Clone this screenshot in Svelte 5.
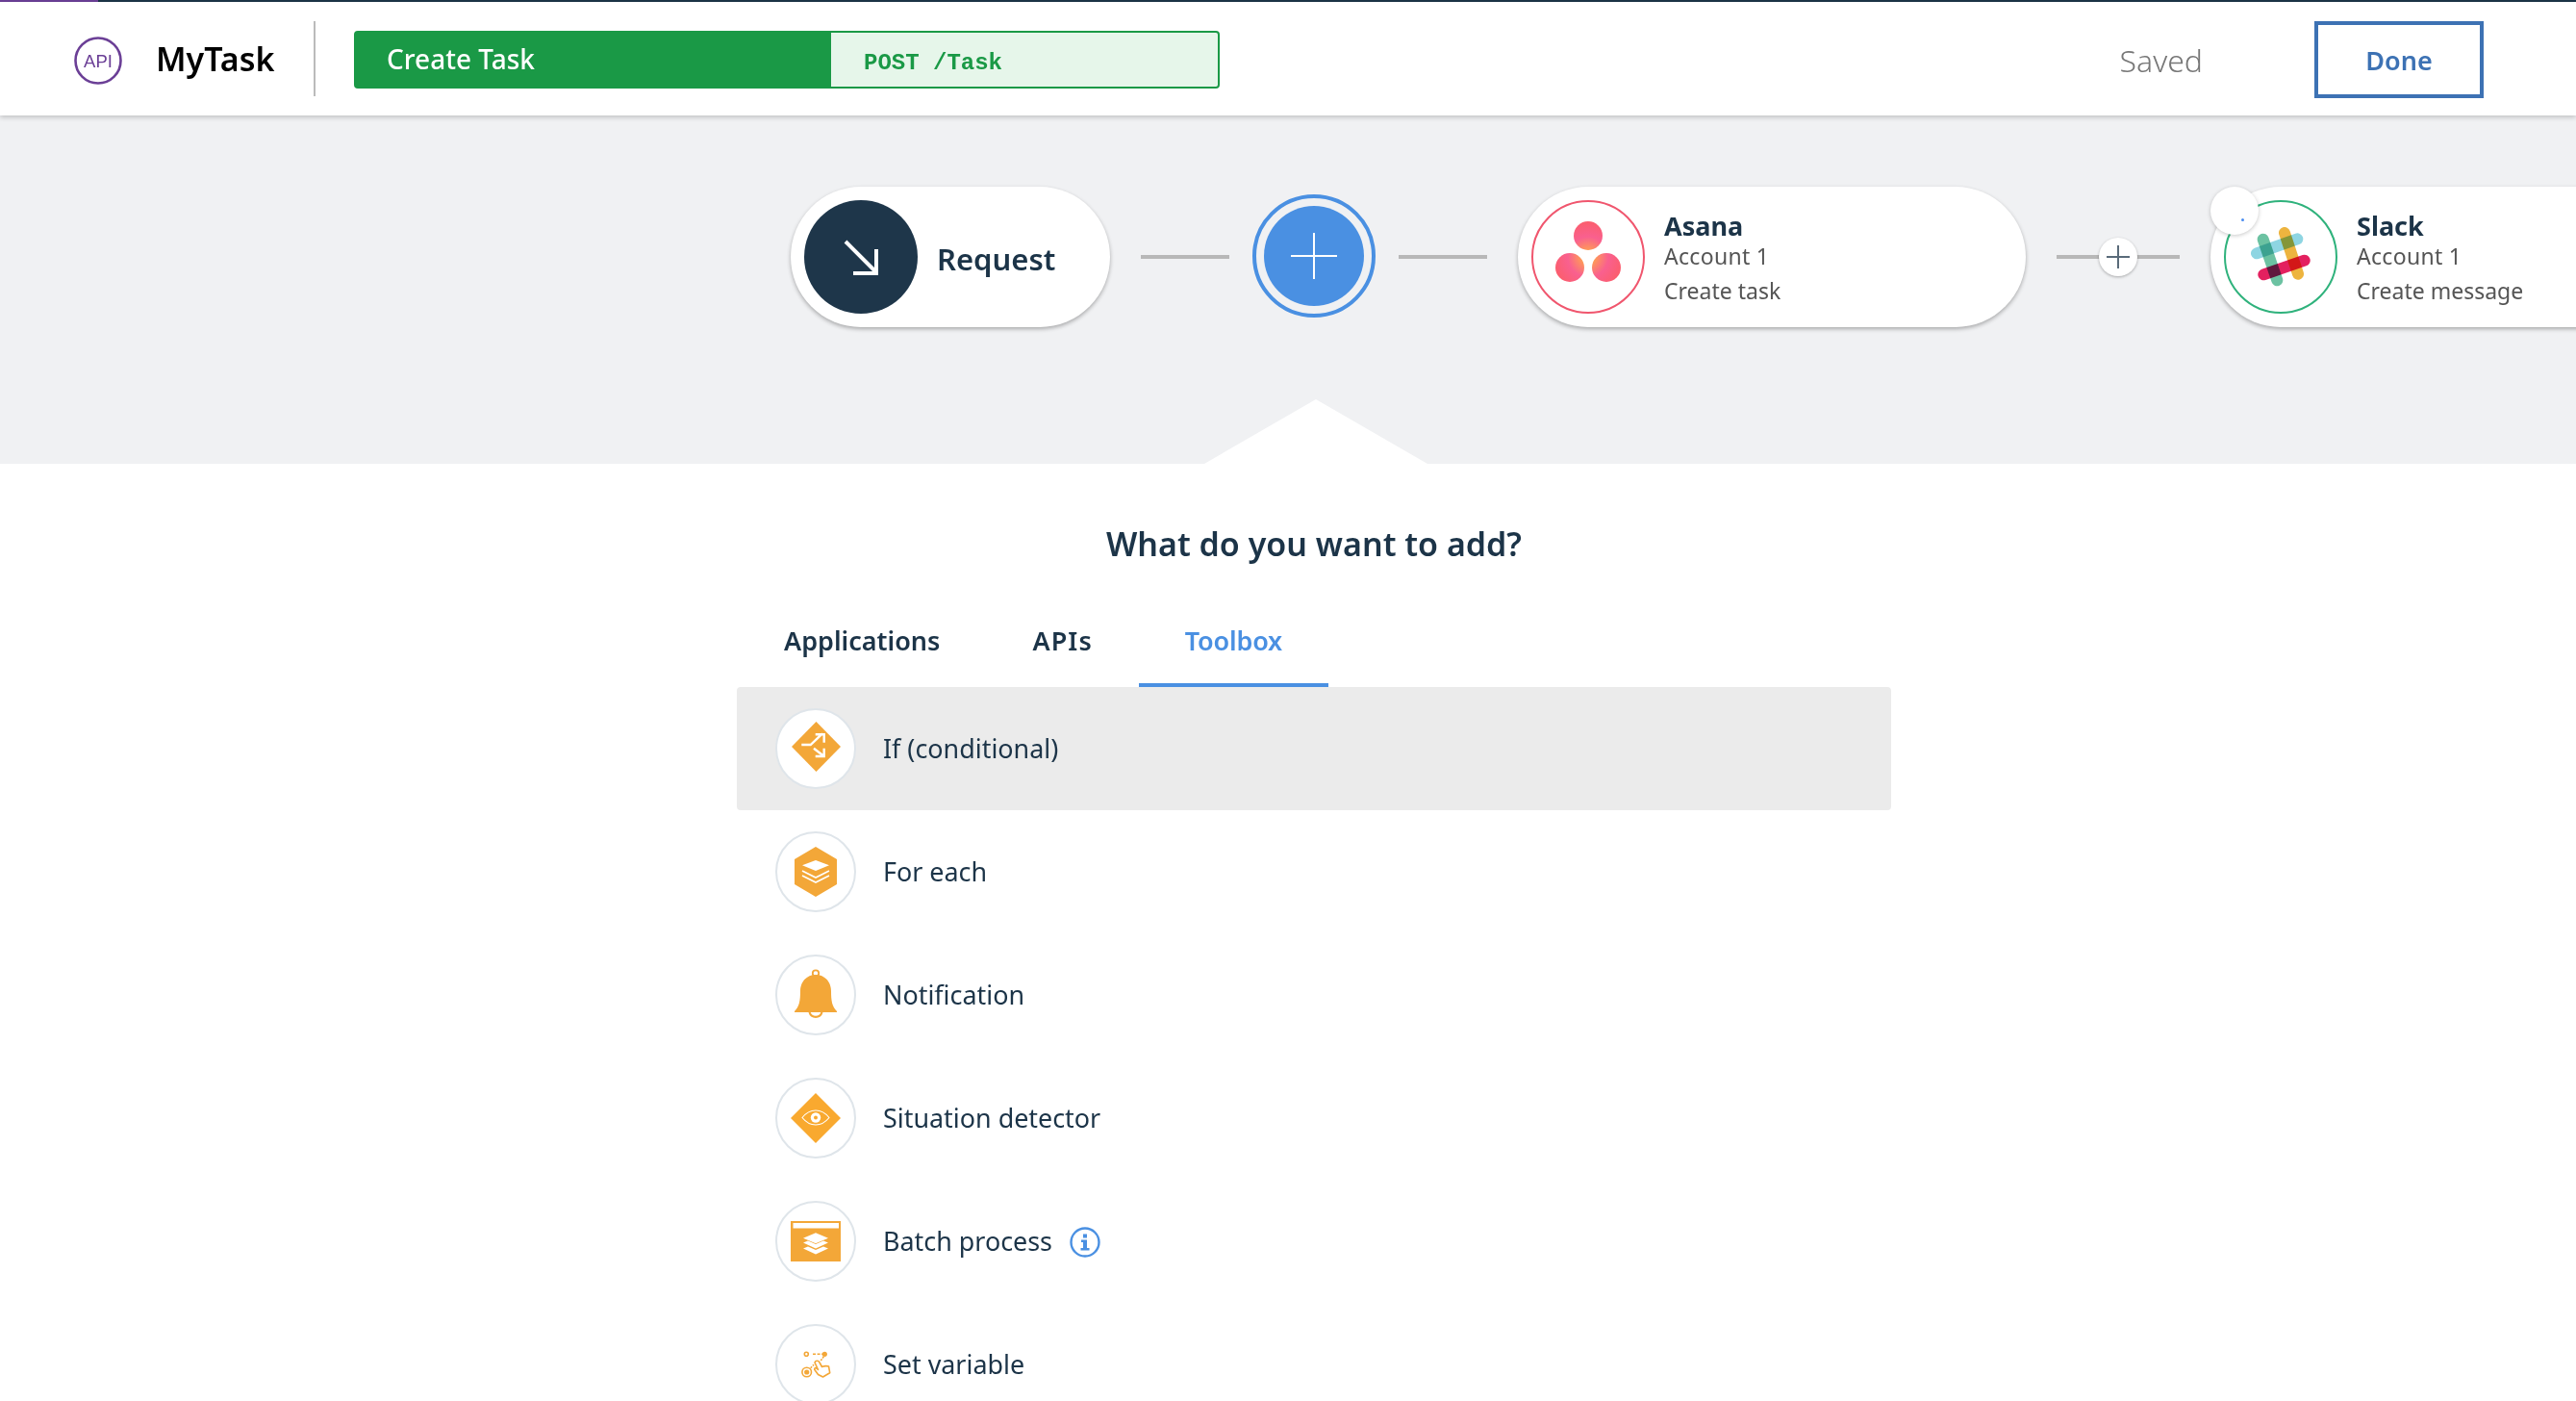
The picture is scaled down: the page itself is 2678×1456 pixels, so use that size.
<script>
  const rows = ['If (conditional)', 'For each', 'Notification', 'Situation detector', 'Batch process', 'Set variable'];
</script>

<div class="page">
  <div class="strip"><div class="strip-accent"></div></div>
  <header class="header">
    <svg class="api" width="50" height="50" viewBox="0 0 50 50">
      <circle cx="25" cy="25" r="23.5" fill="none" stroke="#6b3f96" stroke-width="2.6" />
      <text x="25" y="31.5" text-anchor="middle" class="api-text">API</text>
    </svg>
    <div class="app-name">MyTask</div>
    <div class="divider"></div>
    <div class="endpoint">
      <div class="endpoint-name">Create Task</div>
      <div class="endpoint-path">POST /Task</div>
    </div>
    <div class="saved">Saved</div>
    <button class="done">Done</button>
  </header>

  <section class="canvas">
    <div class="pill request">
      <div class="req-icon">
        <svg width="118" height="118" viewBox="0 0 118 118">
          <path d="M43 43L75 75M51 76H75V51" fill="none" stroke="#fff" stroke-width="4" />
        </svg>
      </div>
      <div class="req-label">Request</div>
    </div>
    <div class="line wide"></div>
    <div class="add-ring">
      <div class="add">
        <svg width="104" height="104" viewBox="0 0 104 104">
          <path d="M28 52H76M52 28V76" stroke="#fff" stroke-width="2" />
        </svg>
      </div>
    </div>
    <div class="line wide"></div>
    <div class="pill app">
      <div class="app-icon asana">
        <svg width="118" height="118" viewBox="0 0 118 118">
          <defs>
            <radialGradient id="asanaFill" gradientUnits="userSpaceOnUse" cx="59" cy="59" r="42">
              <stop offset="0.1" stop-color="#ffa64d" />
              <stop offset="0.5" stop-color="#f9608f" />
              <stop offset="1" stop-color="#fc5d62" />
            </radialGradient>
          </defs>
          <circle cx="59" cy="37" r="15" fill="url(#asanaFill)" />
          <circle cx="40" cy="70" r="15" fill="url(#asanaFill)" />
          <circle cx="78" cy="70" r="15" fill="url(#asanaFill)" />
        </svg>
      </div>
      <div class="app-text">
        <div class="app-title">Asana</div>
        <div class="app-sub first">Account 1</div>
        <div class="app-sub">Create task</div>
      </div>
    </div>
    <div class="line mini">
      <div class="mini-plus">
        <svg width="40" height="40" viewBox="0 0 40 40">
          <path d="M8 20H32M20 8V32" stroke="#5a6b7a" stroke-width="2" />
        </svg>
      </div>
    </div>
    <div class="pill app slack-pill">
      <div class="badge"><span class="badge-dot"></span></div>
      <div class="app-icon slack">
        <svg width="118" height="118" viewBox="0 0 118 118">
          <g fill="none" stroke-width="12" stroke-linecap="round">
            <path class="mul" d="M40.7 40.7L55.3 83.3" stroke="#6cc2a2" />
            <path class="mul" d="M63 34L77 76.7" stroke="#edb43f" />
            <path class="mul" d="M34 55.3L76.3 40.3" stroke="#8ed5e2" />
            <path class="mul" d="M41.3 77.3L83.7 62.7" stroke="#e3205f" />
          </g>
        </svg>
      </div>
      <div class="app-text">
        <div class="app-title">Slack</div>
        <div class="app-sub first">Account 1</div>
        <div class="app-sub">Create message</div>
      </div>
    </div>
    <div class="pointer"></div>
  </section>

  <main class="content">
    <h1 class="title">What do you want to add?</h1>
    <nav class="tabs">
      <div class="tab">Applications</div>
      <div class="tab apis">APIs</div>
      <div class="tab active">Toolbox</div>
    </nav>
    <div class="list">
      {#each rows as label, i}
        <div class="row" class:hover={i === 0}>
          <div class="row-icon">
            <svg width="84" height="84" viewBox="0 0 84 84">
              {#if i === 0}
                <path d="M42.5 14L68 40L42.5 66L17 40Z" fill="#f3a738" />
                <path d="M27.3 38H36.7L49 26.3M41.7 27.3H50.7V35.7M40 41.7L50.7 50M41.7 50H50.7V41.7" fill="none" stroke="#fff" stroke-width="2.4" />
              {:else if i === 1}
                <path d="M42 16L64 29V55L42 68L20 55V29Z" fill="#f3a738" />
                <path d="M28 35.3L42 30L56 35.3L42 41Z" fill="#fff" />
                <path d="M28 41L42 48L56 41M28 46L42 53L56 46" fill="none" stroke="#fff" stroke-width="1.6" />
              {:else if i === 2}
                <circle cx="42" cy="19.5" r="3.2" fill="none" stroke="#f3a738" stroke-width="1.8" />
                <path d="M20 59C25 54 26 48 26 38C26 28 33 21 42 21C51 21 58 28 58 38C58 48 59 54 64 59V60H20Z" fill="#f3a738" />
                <path d="M35.5 60A6.8 6.8 0 0 0 48.5 60" fill="none" stroke="#f3a738" stroke-width="2.2" />
              {:else if i === 3}
                <path d="M42 16L68 42L42 68L16 42Z" fill="#f9a92f" />
                <path d="M28 41.5C36 31.5 48 31.5 56 41.5C48 51.5 36 51.5 28 41.5Z" fill="none" stroke="#fff" stroke-width="1.1" />
                <circle cx="42" cy="41.5" r="5.2" fill="#fff" />
                <circle cx="42" cy="41.5" r="2" fill="#f9a92f" />
              {:else if i === 4}
                <rect x="16" y="21" width="52" height="42" fill="#f3a738" />
                <rect x="18.5" y="23" width="47.5" height="5.5" fill="#fff" />
                <path d="M29 38.7L42 33.3L55 38.7L42 44.3Z" fill="#fff" />
                <path d="M29 43.5L34 41.5L42 45L50 41.5L55 43.5L42 49.5Z" fill="#fff" />
                <path d="M29 49.5L34 47.5L42 51L50 47.5L55 49.5L42 55.5Z" fill="#fff" />
              {:else}
                <g fill="none" stroke="#f3a738" stroke-width="1.6">
                  <circle cx="32.3" cy="31.3" r="2" />
                  <path d="M39 31.3H49" stroke-dasharray="3 1.6" />
                  <circle cx="32.7" cy="50" r="4.8" />
                  <path d="M36.7 45.7L40 42.3M47.3 38L50.7 33.3" stroke-dasharray="2 1.2" />
                  <path d="M41 40C42 37.5 45 38 46 40L48.5 44.5C51 43.5 54 43.5 55.5 44L56.7 50.7L49.5 55L44.5 52.5L40.7 47.3C40.5 45.5 42 45 43.5 46.5L44.5 47.5Z" stroke-linejoin="round" />
                </g>
                <circle cx="51.3" cy="31.3" r="2.6" fill="#f3a738" />
                <circle cx="32.7" cy="50" r="2.6" fill="#f3a738" />
              {/if}
            </svg>
          </div>
          <div class="row-label">{label}</div>
          {#if i === 4}
            <svg class="info" width="32" height="32" viewBox="0 0 32 32">
              <circle cx="16" cy="16" r="14.5" fill="none" stroke="#4a90e2" stroke-width="2.4" />
              <rect x="14" y="7.5" width="4" height="4" fill="#4a90e2" />
              <path d="M12 13.5H18V22H20.5V24.5H11.5V22H14V16H12Z" fill="#4a90e2" />
            </svg>
          {/if}
        </div>
      {/each}
    </div>
  </main>
</div>

<style>
  :global(body) {
    margin: 0;
    background: #fff;
    overflow: hidden;
  }
  .page {
    width: 2678px;
    height: 1456px;
    overflow: hidden;
    font-family: "Noto Sans", "Open Sans", sans-serif;
    color: #1c3448;
  }
  .strip {
    height: 2px;
    background: #1c3448;
  }
  .strip-accent {
    width: 102px;
    height: 2px;
    background: #6b3f96;
  }
  .header {
    position: relative;
    z-index: 2;
    height: 118px;
    display: flex;
    align-items: center;
    padding: 0 96px 0 77px;
    background: #fff;
    box-shadow: 0 2px 5px rgba(0, 0, 0, 0.2);
  }
  .api {
    flex: none;
    margin-top: 4px;
  }
  .api-text {
    font-family: "Liberation Sans", sans-serif;
    font-size: 18.5px;
    fill: #6b3f96;
  }
  .app-name {
    margin-left: 35px;
    width: 123px;
    font-size: 34px;
    font-weight: 600;
    color: #000;
    white-space: nowrap;
  }
  .divider {
    margin-left: 41px;
    width: 2px;
    height: 78px;
    background: #bbb;
  }
  .endpoint {
    margin-left: 40px;
    margin-top: 2px;
    width: 900px;
    height: 60px;
    box-sizing: border-box;
    display: flex;
    border: 2px solid #1a9946;
    border-radius: 4px;
    background: #1a9946;
  }
  .endpoint-name {
    width: 494px;
    padding-left: 32px;
    box-sizing: border-box;
    font-size: 28px;
    font-weight: 500;
    line-height: 54px;
    color: #fff;
  }
  .endpoint-path {
    flex: 1;
    padding: 7px 0 0 34px;
    background: #e6f6ea;
    border-radius: 0 2px 2px 0;
    font-family: "Liberation Mono", monospace;
    font-size: 24px;
    font-weight: 700;
    line-height: 49px;
    color: #1a9946;
  }
  .saved {
    margin-left: auto;
    margin-right: -1px;
    margin-top: 2px;
    font-size: 32px;
    font-weight: 300;
    color: #777;
  }
  .done {
    margin-left: 117px;
    width: 176px;
    height: 80px;
    margin-top: 2px;
    box-sizing: border-box;
    border: 4px solid #3d72b4;
    background: #fff;
    border-radius: 0;
    padding: 0;
    font-family: inherit;
    font-size: 27px;
    font-weight: 600;
    color: #3d72b4;
  }
  .canvas {
    position: relative;
    height: 362px;
    box-sizing: border-box;
    padding: 74px 0 0 822px;
    display: flex;
    align-items: flex-start;
    background: #f0f1f3;
  }
  .pill {
    flex: none;
    position: relative;
    box-sizing: border-box;
    height: 146px;
    display: flex;
    align-items: center;
    border-radius: 73px;
    background: #fff;
    box-shadow: 0 2px 4px rgba(0, 0, 0, 0.3);
  }
  .request {
    width: 332px;
    padding-left: 14px;
  }
  .req-icon {
    width: 118px;
    height: 118px;
    border-radius: 50%;
    background: #1e364a;
  }
  .req-icon svg,
  .add svg,
  .app-icon svg,
  .mini-plus svg,
  .row-icon svg {
    display: block;
  }
  .req-label {
    margin-left: 20px;
    padding-top: 3px;
    font-size: 31px;
    font-weight: 600;
    color: #1c3448;
  }
  .line {
    flex: none;
    height: 4px;
    margin-top: 71px;
    background: #b8b8b8;
  }
  .wide {
    width: 92px;
  }
  .request + .wide {
    margin: 71px 24px 0 32px;
  }
  .add-ring + .wide {
    margin: 71px 32px 0 24px;
  }
  .add-ring {
    flex: none;
    box-sizing: border-box;
    width: 128px;
    height: 128px;
    margin-top: 8px;
    padding: 8px;
    border: 4px solid #4a90e2;
    border-radius: 50%;
  }
  .add {
    width: 104px;
    height: 104px;
    border-radius: 50%;
    background: #4a90e2;
  }
  .app {
    width: 528px;
    padding-left: 14px;
  }
  .app-icon {
    flex: none;
    box-sizing: border-box;
    width: 118px;
    height: 118px;
    border-radius: 50%;
    background: #fff;
  }
  .app-icon svg {
    margin: -2px;
  }
  .asana {
    border: 2px solid #f0566e;
  }
  .slack {
    border: 2px solid #2fb27c;
  }
  .mul {
    mix-blend-mode: multiply;
  }
  .app-text {
    margin-left: 20px;
    padding-top: 8px;
    color: #555;
  }
  .app-title {
    font-size: 27px;
    font-weight: 700;
    line-height: 34px;
    color: #1c3448;
  }
  .app-sub {
    font-size: 23px;
    line-height: 44px;
    color: #555;
  }
  .app-sub.first {
    line-height: 28px;
    letter-spacing: 0.3px;
  }
  .mini {
    width: 128px;
    margin: 71px 32px 0;
    display: flex;
    align-items: center;
    justify-content: center;
  }
  .mini-plus {
    flex: none;
    width: 40px;
    height: 40px;
    border-radius: 50%;
    background: #fff;
    box-shadow: 0 1px 3px rgba(0, 0, 0, 0.3);
  }
  .badge {
    position: absolute;
    left: 0;
    top: 0;
    z-index: 1;
    width: 50px;
    height: 50px;
    border-radius: 50%;
    background: #fff;
    box-shadow: 0 1px 4px rgba(0, 0, 0, 0.22);
  }
  .badge-dot {
    position: absolute;
    left: 32px;
    top: 33px;
    width: 3px;
    height: 3px;
    border-radius: 50%;
    background: #4a8cf0;
  }
  .pointer {
    position: absolute;
    left: 1252px;
    bottom: 0;
    width: 232px;
    height: 67px;
    background: #fff;
    clip-path: polygon(50% 0, 100% 100%, 0 100%);
  }
  .content {
    box-sizing: border-box;
    width: 1200px;
    margin-left: 766px;
    padding-top: 61px;
  }
  .title {
    margin: 0 0 61px;
    font-size: 34px;
    font-weight: 600;
    line-height: 44px;
    text-align: center;
    color: #1c3448;
  }
  .tabs {
    display: flex;
    padding-left: 1px;
  }
  .tab {
    padding: 0 48px 26px;
    border-bottom: 4px solid transparent;
    font-size: 27px;
    font-weight: 600;
    line-height: 36px;
    color: #1c3448;
  }
  .tab.apis {
    letter-spacing: 1.1px;
  }
  .tab.active {
    color: #4a90e2;
    border-bottom-color: #4a90e2;
    letter-spacing: -0.2px;
  }
  .row {
    box-sizing: border-box;
    height: 128px;
    display: flex;
    align-items: center;
    padding-left: 40px;
    border-radius: 4px;
  }
  .row.hover {
    background: #ebebeb;
  }
  .row-icon {
    flex: none;
    box-sizing: border-box;
    width: 84px;
    height: 84px;
    border: 2px solid #dfe5ea;
    border-radius: 50%;
    background: #fff;
  }
  .row-icon svg {
    margin: -2px;
  }
  .row-label {
    margin-left: 28px;
    padding-bottom: 2px;
    font-size: 26.9px;
    color: #1c3448;
  }
  .info {
    margin-left: 18px;
    margin-top: 2px;
  }
</style>
